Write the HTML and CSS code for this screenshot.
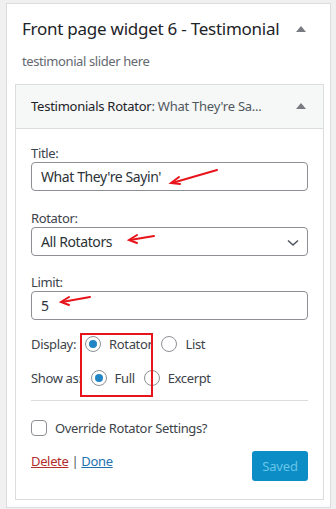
FILE: index.html
```html
<!DOCTYPE html>
<html lang="en">
<head>
    <meta charset="UTF-8">
    <meta name="viewport" content="width=device-width, initial-scale=1.0">
    <title>Testimonial Widget</title>
    <link rel="stylesheet" href="styles.css">
</head>
<body>
    <div class="sidebar-widget">
        <div class="sidebar-head">
            <h2>Front page widget 6 - Testimonial</h2>
            <span class="toggle-arrow"></span>
        </div>
        <p class="sidebar-desc">testimonial slider here</p>

        <div class="widget">
            <div class="widget-top">
                <h3>Testimonials Rotator<span class="in-title">: What They're Sa...</span></h3>
                <span class="toggle-arrow"></span>
            </div>

            <div class="widget-inside">
                <label class="field-label">Title:</label>
                <div class="text-field">What They're Sayin'</div>

                <label class="field-label">Rotator:</label>
                <div class="text-field select-field">
                    All Rotators
                    <svg class="chevron" width="12" height="8" viewBox="0 0 12 8"><path d="M1 1.5 L6 6 L11 1.5" fill="none" stroke="#50575e" stroke-width="1.6"/></svg>
                </div>

                <label class="field-label">Limit:</label>
                <div class="text-field limit-field">5</div>

                <div class="radio-row">
                    <span class="row-label">Display:</span>
                    <span class="radio checked"></span><span class="radio-text">Rotator</span>
                    <span class="radio"></span><span class="radio-text">List</span>
                </div>
                <div class="radio-row showas-row">
                    <span class="row-label">Show as:</span>
                    <span class="radio checked"></span><span class="radio-text">Full</span>
                    <span class="radio"></span><span class="radio-text">Excerpt</span>
                </div>

                <hr class="divider">

                <div class="check-row">
                    <span class="checkbox"></span>
                    <span>Override Rotator Settings?</span>
                </div>

                <div class="widget-actions">
                    <div class="links">
                        <a href="#" class="delete-link">Delete</a> | <a href="#" class="done-link">Done</a>
                    </div>
                    <button class="save-btn" disabled>Saved</button>
                </div>
            </div>
        </div>
    </div>

    <svg class="annotations" width="336" height="509" viewBox="0 0 336 509">
        <g stroke="#e8141b" stroke-width="2" fill="none" stroke-linecap="round">
            <path d="M217 170 L172 183"/>
            <path d="M179 177 L171 183 L180 184"/>
            <path d="M154 236 L130 240"/>
            <path d="M137 235 L129 240 L137 243"/>
            <path d="M90 297 L62 302"/>
            <path d="M69 297 L61 302 L69 305"/>
        </g>
        <rect x="81" y="334" width="71" height="62" fill="none" stroke="#e8141b" stroke-width="2"/>
    </svg>
</body>
</html>
```

FILE: styles.css
```css
* {
    margin: 0;
    padding: 0;
    box-sizing: border-box;
}

body {
    font-family: 'Noto Sans', 'Open Sans', Arial, sans-serif;
    background: #f0f0f1;
    color: #1d2327;
    width: 336px;
    height: 509px;
    overflow: hidden;
    position: relative;
    padding: 3px 6px 2px 6px;
}

.sidebar-widget {
    background: #fff;
    border: 1px solid #dcdcde;
    height: 505px;
    width: 325px;
    padding: 0 6px 0 8px;
}

.sidebar-head {
    display: flex;
    align-items: center;
    justify-content: space-between;
    padding: 12px 18px 0 7px;
    height: 38px;
}

.sidebar-head h2 {
    font-size: 17px;
    font-weight: 400;
    line-height: 24px;
    letter-spacing: -0.25px;
}

.toggle-arrow {
    width: 0;
    height: 0;
    border-left: 5px solid transparent;
    border-right: 5px solid transparent;
    border-bottom: 6px solid #787c82;
}

.sidebar-desc {
    font-size: 13px;
    color: #646970;
    line-height: 18px;
    padding-left: 7px;
    margin-top: 10px;
    letter-spacing: -0.4px;
}

.widget {
    margin-top: 14px;
    border: 1px solid #dcdcde;
    height: 416px;
}

.widget-top {
    background: #f6f7f7;
    border-bottom: 1px solid #dcdcde;
    height: 44px;
    display: flex;
    align-items: center;
    justify-content: space-between;
    padding: 0 17px 2px 15px;
}

.widget-top h3 {
    font-size: 13px;
    font-weight: 400;
    letter-spacing: -0.25px;
}

.in-title {
    color: #50575e;
}

.widget-inside {
    padding: 15px 15px 0 15px;
    font-size: 13px;
    letter-spacing: -0.35px;
}

.field-label {
    display: block;
    font-size: 13px;
    line-height: 18px;
    color: #3c434a;
}

.text-field {
    height: 29px;
    border: 1px solid #8c8f94;
    border-radius: 4px;
    font-size: 14px;
    letter-spacing: -0.4px;
    line-height: 27px;
    padding: 0 9px;
    color: #2c3338;
    margin-bottom: 18px;
    position: relative;
}

.select-field {
    margin-bottom: 17px;
}

.limit-field {
    margin-bottom: 14px;
}

.chevron {
    position: absolute;
    right: 8px;
    top: 11px;
}

.radio-row {
    display: flex;
    align-items: center;
    color: #3c434a;
    height: 20px;
}

.showas-row {
    margin-top: 14px;
}

.row-label {
    margin-right: 9px;
}

.radio {
    width: 16px;
    height: 16px;
    border: 1px solid #8c8f94;
    border-radius: 50%;
    margin-right: 8px;
    display: flex;
    align-items: center;
    justify-content: center;
}

.radio.checked::after {
    content: "";
    width: 8px;
    height: 8px;
    border-radius: 50%;
    background: #2185c5;
}

.radio-text {
    margin-right: 9px;
}

.divider {
    border: none;
    border-top: 1px solid #dcdcde;
    margin-top: 12px;
}

.check-row {
    display: flex;
    align-items: center;
    color: #3c434a;
    margin-top: 18px;
    gap: 8px;
}

.checkbox {
    width: 16px;
    height: 16px;
    border: 1px solid #8c8f94;
    border-radius: 4px;
}

.widget-actions {
    display: flex;
    justify-content: space-between;
    align-items: flex-start;
    margin-top: 14px;
}

.links {
    line-height: 18px;
    color: #50575e;
    padding-top: 1px;
}

.delete-link {
    color: #b32d2e;
}

.done-link {
    color: #2271b1;
}

.save-btn {
    font-family: inherit;
    width: 56px;
    height: 30px;
    border: none;
    border-radius: 3px;
    background: #0d8dc6;
    color: #66c5e8;
    font-size: 13px;
    letter-spacing: -0.2px;
}

.annotations {
    position: absolute;
    left: 0;
    top: 0;
    pointer-events: none;
}
```
